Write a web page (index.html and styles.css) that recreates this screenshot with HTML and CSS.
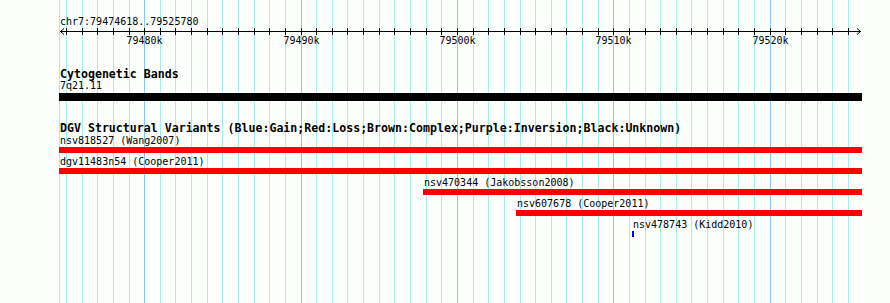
FILE: index.html
```html
<!DOCTYPE html>
<html lang="en">
<head>
<meta charset="utf-8">
<title>chr7:79474618..79525780</title>
<link rel="stylesheet" href="styles.css">
</head>
<body>

<div class="browser">
  <!-- grid lines, one per kb -->
  <svg class="grid" width="890" height="303" viewBox="0 0 890 303">
    <path class="minor" d="M59.5 0V303M66.5 0V303M82.5 0V303M97.5 0V303M113.5 0V303M129.5 0V303M160.5 0V303M175.5 0V303M191.5 0V303M207.5 0V303M222.5 0V303M238.5 0V303M254.5 0V303M269.5 0V303M285.5 0V303M316.5 0V303M332.5 0V303M347.5 0V303M363.5 0V303M379.5 0V303M394.5 0V303M410.5 0V303M426.5 0V303M441.5 0V303M473.5 0V303M488.5 0V303M504.5 0V303M520.5 0V303M535.5 0V303M551.5 0V303M566.5 0V303M582.5 0V303M598.5 0V303M629.5 0V303M645.5 0V303M660.5 0V303M676.5 0V303M691.5 0V303M707.5 0V303M723.5 0V303M738.5 0V303M754.5 0V303M785.5 0V303M801.5 0V303M817.5 0V303M832.5 0V303M848.5 0V303"/>
    <path class="major" d="M144.5 0V303M301.5 0V303M457.5 0V303M613.5 0V303M770.5 0V303"/>
  </svg>

  <div class="tracks">
    <div class="locus">chr7:79474618..79525780</div>

    <svg class="ruler" width="803" height="18" viewBox="0 0 803 18">
      <path class="axis" d="M1 3.5H802M5 0.5L1.5 3.5L5 6.5M798 0.5L801.5 3.5L798 6.5"/>
      <path class="ticks" d="M7.5 0V7M23.5 0V7M38.5 0V7M54.5 0V7M70.5 0V7M85.5 0V7M101.5 0V7M116.5 0V7M132.5 0V7M148.5 0V7M163.5 0V7M179.5 0V7M195.5 0V7M210.5 0V7M226.5 0V7M242.5 0V7M257.5 0V7M273.5 0V7M288.5 0V7M304.5 0V7M320.5 0V7M335.5 0V7M351.5 0V7M367.5 0V7M382.5 0V7M398.5 0V7M414.5 0V7M429.5 0V7M445.5 0V7M461.5 0V7M476.5 0V7M492.5 0V7M507.5 0V7M523.5 0V7M539.5 0V7M554.5 0V7M570.5 0V7M586.5 0V7M601.5 0V7M617.5 0V7M632.5 0V7M648.5 0V7M664.5 0V7M679.5 0V7M695.5 0V7M711.5 0V7M726.5 0V7M742.5 0V7M758.5 0V7M773.5 0V7M789.5 0V7"/>
      <text x="85.5" y="16">79480k</text>
      <text x="242.5" y="16">79490k</text>
      <text x="398.5" y="16">79500k</text>
      <text x="554.5" y="16">79510k</text>
      <text x="711.5" y="16">79520k</text>
    </svg>

    <section class="track">
      <h2 class="track-title">Cytogenetic Bands</h2>
      <div class="feature">
        <div class="feature-label">7q21.11</div>
        <div class="band"></div>
      </div>
    </section>

    <section class="track dgv">
      <h2 class="track-title">DGV Structural Variants (Blue:Gain;Red:Loss;Brown:Complex;Purple:Inversion;Black:Unknown)</h2>
      <div class="feature">
        <div class="feature-label">nsv818527 (Wang2007)</div>
        <div class="cnv loss" style="width:803px"></div>
      </div>
      <div class="feature">
        <div class="feature-label">dgv11483n54 (Cooper2011)</div>
        <div class="cnv loss" style="width:803px"></div>
      </div>
      <div class="feature" style="margin-left:364px">
        <div class="feature-label">nsv470344 (Jakobsson2008)</div>
        <div class="cnv loss" style="width:439px"></div>
      </div>
      <div class="feature" style="margin-left:457px">
        <div class="feature-label">nsv607678 (Cooper2011)</div>
        <div class="cnv loss" style="width:346px"></div>
      </div>
      <div class="feature" style="margin-left:573px">
        <div class="feature-label">nsv478743 (Kidd2010)</div>
        <div class="cnv gain" style="width:2px"></div>
      </div>
    </section>
  </div>
</div>

</body>
</html>
```

FILE: styles.css
```css
html, body {
  margin: 0;
  background-color: #fcfffc;
}
body {
  font-family: "DejaVu Sans Mono", "Liberation Mono", monospace;
  font-size: 10px;
  line-height: 12px;
  color: #000;
}
.browser {
  position: relative;
  width: 890px;
  height: 303px;
  overflow: hidden;
}
.grid {
  position: absolute;
  top: 0;
  left: 0;
}
.grid path {
  fill: none;
  stroke-width: 1;
  shape-rendering: crispEdges;
}
.grid .minor {
  stroke: #a8ecec;
}
.grid .major {
  stroke: #88c8ec;
}
.tracks {
  position: relative;
  margin-left: 59px;
  width: 803px;
  padding-top: 16px;
}
.locus {
  padding-left: 1px;
  white-space: nowrap;
}
.ruler {
  display: block;
}
.ruler path {
  fill: none;
  stroke: #000;
  stroke-width: 1;
}
.ruler .ticks {
  shape-rendering: crispEdges;
}
.ruler text {
  font-family: "DejaVu Sans Mono", "Liberation Mono", monospace;
  font-size: 10px;
  text-anchor: middle;
  fill: #000;
}
.track {
  margin-top: 22px;
}
.track.dgv {
  margin-top: 21px;
}
.track-title {
  margin: 0;
  padding-left: 1px;
  font-size: 11.6px;
  line-height: 12px;
  font-weight: bold;
  white-space: nowrap;
}
.dgv .track-title {
  margin-bottom: 1px;
}
.feature {
  margin-bottom: 3px;
}
.feature-label {
  padding-left: 1px;
  white-space: nowrap;
}
.band {
  margin-top: 1px;
  height: 8px;
  background-color: #000;
}
.cnv {
  height: 6px;
}
.loss {
  background-color: #ff0000;
}
.gain {
  background-color: #0000ee;
}
```
